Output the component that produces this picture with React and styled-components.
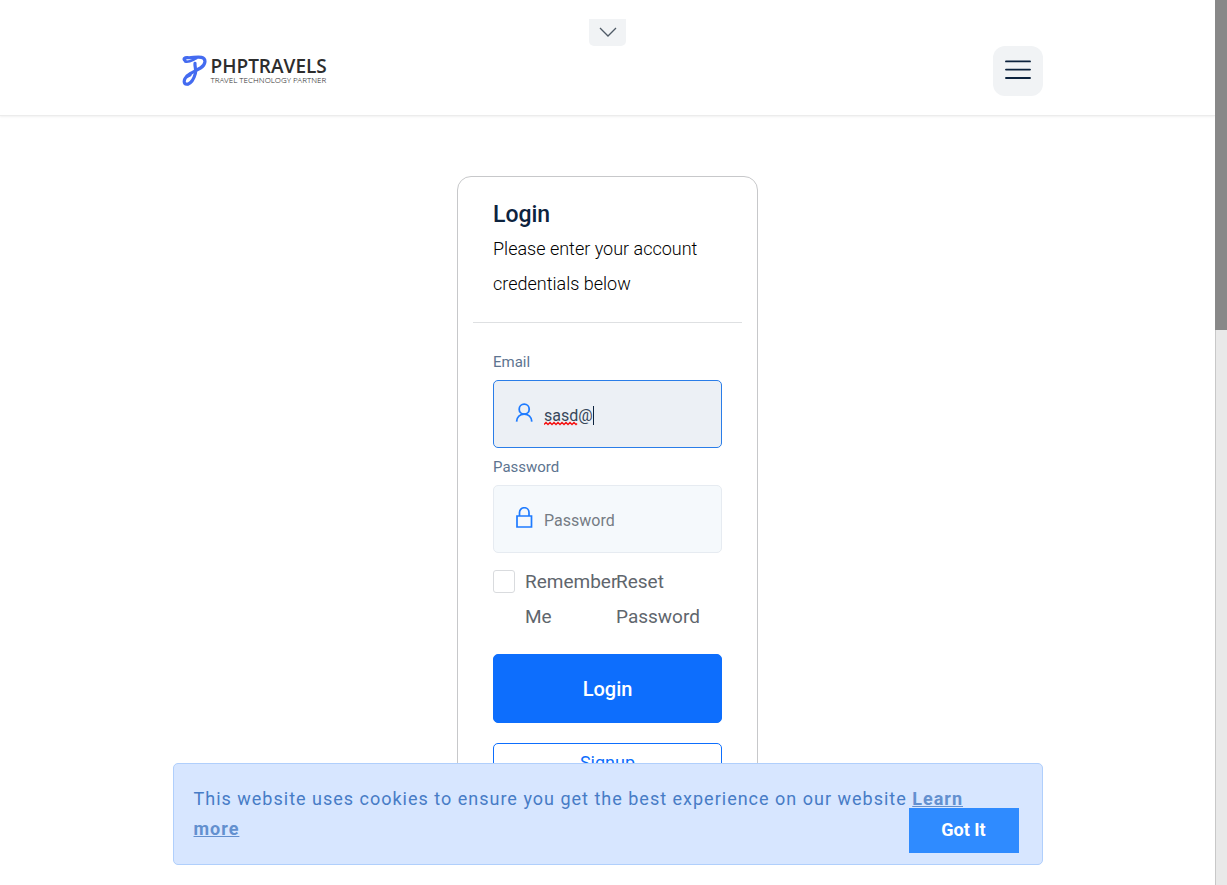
import React from "react";
import styled, { createGlobalStyle } from "styled-components";

const GlobalStyle = createGlobalStyle`
  *, *::before, *::after { box-sizing: border-box; }
  body { margin: 0; background: #fff; color: #111417; font-family: Roboto, "Liberation Sans", sans-serif; }
  button, input { font-family: inherit; }
  h1, p { margin: 0; }
`;

const Shell = styled.div`
  display: grid;
  grid-template-columns: minmax(0, 1fr) 12px;
  height: 100vh;
  overflow: hidden;
`;

const Viewport = styled.div`
  position: relative;
  height: 100vh;
  overflow: hidden;
`;

const ScrollRail = styled.div`
  display: grid;
  grid-template-rows: 22fr 37fr;
  background: #e9e9e9;
  border-left: 1px solid #c8c8c8;
`;

const ScrollThumb = styled.div`
  background: #888;
  margin-left: -1px;
`;

const Header = styled.header`
  display: flex;
  flex-direction: column;
  align-items: center;
  padding: 19px 15px;
  border-bottom: 1px solid #ececec;
  box-shadow: 0 1px 2px rgba(0, 0, 0, 0.06);
`;

const TopToggle = styled.button`
  display: grid;
  place-items: center;
  width: 37px;
  height: 27px;
  padding: 0 0 2px;
  border: 0;
  border-radius: 0 0 5px 5px;
  background: #f1f3f5;
  color: #4f5a66;
`;

const Nav = styled.nav`
  display: flex;
  justify-content: space-between;
  align-items: center;
  width: 100%;
  max-width: 870px;
`;

const Brand = styled.a`
  display: flex;
  align-items: center;
  gap: 4px;
  padding-left: 9px;
  color: #2d2d2d;
  text-decoration: none;
`;

const BrandText = styled.span`
  display: flex;
  flex-direction: column;
`;

const BrandName = styled.span`
  font-family: "Open Sans", "Noto Sans", sans-serif;
  font-size: 19px;
  line-height: 18px;
  font-weight: 600;
`;

const BrandTag = styled.span`
  font-family: "Noto Sans", "Open Sans", sans-serif;
  font-size: 8px;
  line-height: 10px;
  font-weight: 300;
  color: #333;
`;

const MenuButton = styled.button`
  display: grid;
  place-items: center;
  width: 50px;
  height: 50px;
  padding: 0 0 2px;
  border: 0;
  border-radius: 12px;
  background: #f1f3f5;
`;

const Main = styled.main`
  display: flex;
  justify-content: center;
  padding: 60px 15px;
`;

const Card = styled.section`
  width: 301px;
  padding: 21px 15px 35px;
  border: 1px solid #c7c8ca;
  border-radius: 14px;
`;

const Intro = styled.div`
  padding: 0 20px 21px;
  border-bottom: 1px solid #dee0e2;
`;

const Title = styled.h1`
  font-size: 23px;
  line-height: 33px;
  font-weight: 500;
  color: #0d233e;
`;

const Lead = styled.p`
  font-size: 18px;
  line-height: 35px;
  font-weight: 300;
  color: #000;
`;

const Form = styled.form`
  padding: 20px 20px 0;
`;

const Label = styled.label`
  display: block;
  padding-top: 2px;
  font-size: 15px;
  line-height: 35px;
  color: #5d7490;
`;

const Field = styled.div`
  position: relative;
  height: 68px;
`;

const FieldIcon = styled.span`
  position: absolute;
  left: 20px;
  top: 22px;
  display: flex;
  color: #1e7bff;
`;

const TextInput = styled.input`
  width: 100%;
  height: 100%;
  padding: 3px 20px 0 50px;
  border: 1px solid ${(p) => (p.$active ? "#2a7de8" : "#e6ebf1")};
  border-radius: 5px;
  outline: 0;
  background: ${(p) => (p.$active ? "#ecf0f5" : "#f5f9fc")};
  color: #37475a;
  font-size: 16px;
  &::placeholder { color: #757c84; opacity: 1; }
`;

const Squiggle = styled.svg`
  position: absolute;
  left: 51px;
  top: 41px;
`;

const Caret = styled.span`
  position: absolute;
  left: 100px;
  top: 26px;
  width: 1px;
  height: 19px;
  background: #0d233e;
`;

const Options = styled.div`
  display: flex;
  align-items: flex-start;
  padding: 11px 0 20px;
  font-size: 19px;
  line-height: 35px;
  color: #5f666d;
`;

const Checkbox = styled.input`
  appearance: none;
  flex: none;
  width: 22px;
  height: 23px;
  margin: 6px 10px 0 0;
  border: 1px solid #d9dbde;
  border-radius: 3px;
  background: #fff;
`;

const RememberLabel = styled.label`
  width: 91px;
`;

const ResetLink = styled.a`
  flex: 1;
  color: inherit;
  text-decoration: none;
`;

const Button = styled.button`
  display: block;
  width: 100%;
  height: 69px;
  margin-bottom: 20px;
  border: 1px solid #0d6efd;
  border-radius: 5px;
  background: #0d6efd;
  color: #fff;
  font-size: 20px;
  font-weight: 500;
`;

const SignupLink = styled.a`
  display: block;
  height: 40px;
  border: 1px solid #0d6efd;
  border-radius: 5px;
  color: #0d6efd;
  font-size: 18px;
  line-height: 38px;
  text-align: center;
  text-decoration: none;
`;

const CookieDock = styled.div`
  position: absolute;
  left: 0;
  right: 0;
  bottom: 20px;
  display: flex;
  justify-content: center;
  padding: 0 15px;
`;

const CookieBar = styled.aside`
  position: relative;
  width: 100%;
  max-width: 870px;
  padding: 20px;
  border: 1px solid #b0cffc;
  border-radius: 5px;
  background: #d7e6ff;
  color: #477cc6;
  font-size: 18px;
  line-height: 30px;
  letter-spacing: 1px;
`;

const CookieText = styled.p`
  padding-right: 50px;
`;

const CookieLink = styled.a`
  color: #6390cf;
  font-weight: 700;
`;

const AcceptButton = styled.button`
  position: absolute;
  right: 23px;
  bottom: 11px;
  width: 110px;
  height: 45px;
  padding: 0 0 2px;
  border: 0;
  background: #2f8bff;
  color: #fff;
  font-size: 18px;
  font-weight: 700;
`;

const LogoMark = () => (
  <svg width="25" height="32" viewBox="0 0 25 32" fill="none" stroke="#446bf0" strokeLinecap="round" strokeLinejoin="round" aria-hidden="true">
    <path d="M3 5.600C1 4 2.600 2.400 5.800 2.700 10 3.100 15 1.400 19.500 2.400c5.200 1.200 4.200 7.600-1 10.600C14.200 15.600 8.400 17.800 5 21" strokeWidth="3.200" />
    <path d="M3.200 6.600c4.400 1 6.800-1.400 11-3.200" strokeWidth="2.600" />
    <path d="M13 8.400c-.4 3.200 1.400 6.200.4 10-1.200 4.400-3.800 9.400-7.400 10.800" strokeWidth="3.200" />
    <path d="M8 20c-3.400 1.200-5.800 3.600-5.800 6.600 0 1.600 1 2.800 2.600 2.600" strokeWidth="3.200" />
  </svg>
);

export default function App() {
  return (
    <>
      <GlobalStyle />
      <Shell>
        <Viewport>
          <Header>
            <TopToggle type="button" aria-label="Show top bar">
              <svg width="18" height="10" viewBox="0 0 18 10" fill="none" stroke="currentColor" strokeWidth="1.3" aria-hidden="true">
                <path d="M1 1l8 8 8-8" />
              </svg>
            </TopToggle>
            <Nav>
              <Brand href="#">
                <LogoMark />
                <BrandText>
                  <BrandName>PHPTRAVELS</BrandName>
                  <BrandTag>TRAVEL TECHNOLOGY PARTNER</BrandTag>
                </BrandText>
              </Brand>
              <MenuButton type="button" aria-label="Menu">
                <svg width="26" height="20" viewBox="0 0 26 20" stroke="#0d233e" strokeWidth="1.9" strokeLinecap="round" aria-hidden="true">
                  <path d="M1 1.400h24M1 9.600h24M1 18h24" />
                </svg>
              </MenuButton>
            </Nav>
          </Header>

          <Main>
            <Card>
              <Intro>
                <Title>Login</Title>
                <Lead>Please enter your account credentials below</Lead>
              </Intro>
              <Form onSubmit={(e) => e.preventDefault()}>
                <Label htmlFor="email">Email</Label>
                <Field>
                  <TextInput $active id="email" type="text" defaultValue="sasd@" />
                  <FieldIcon>
                    <svg width="22" height="22" viewBox="0 0 22 22" fill="none" stroke="currentColor" strokeWidth="1.8" aria-hidden="true">
                      <circle cx="11.200" cy="7.200" r="5" />
                      <path d="M3.600 19.600c.3-4.400 3.400-7.400 7.600-7.400s7.300 3 7.600 7.400" />
                    </svg>
                  </FieldIcon>
                  <Squiggle width="35" height="5" viewBox="0 0 35 5" fill="none" stroke="#f51414" strokeWidth="1.500" aria-hidden="true">
                    <path d="M0 3.500l2-2 2 2 2-2 2 2 2-2 2 2 2-2 2 2 2-2 2 2 2-2 2 2 2-2 2 2 2-2 2 2 1-1" />
                  </Squiggle>
                  <Caret />
                </Field>
                <Label htmlFor="password">Password</Label>
                <Field>
                  <TextInput id="password" type="password" placeholder="Password" />
                  <FieldIcon>
                    <svg width="22" height="22" viewBox="0 0 22 22" fill="none" stroke="currentColor" strokeWidth="1.700" aria-hidden="true">
                      <path d="M4 9h14.500v11H4zM6.500 9V5.500a4.700 4.700 0 0 1 9.500 0V9" />
                    </svg>
                  </FieldIcon>
                </Field>
                <Options>
                  <Checkbox id="remember" type="checkbox" />
                  <RememberLabel htmlFor="remember">Remember Me</RememberLabel>
                  <ResetLink href="#">Reset Password</ResetLink>
                </Options>
                <Button type="submit">Login</Button>
                <SignupLink href="#">Signup</SignupLink>
              </Form>
            </Card>
          </Main>

          <CookieDock>
            <CookieBar>
              <CookieText>
                This website uses cookies to ensure you get the best experience on our website{" "}
                <CookieLink href="#">Learn more</CookieLink>
              </CookieText>
              <AcceptButton type="button">Got It</AcceptButton>
            </CookieBar>
          </CookieDock>
        </Viewport>
        <ScrollRail aria-hidden="true">
          <ScrollThumb />
        </ScrollRail>
      </Shell>
    </>
  );
}
